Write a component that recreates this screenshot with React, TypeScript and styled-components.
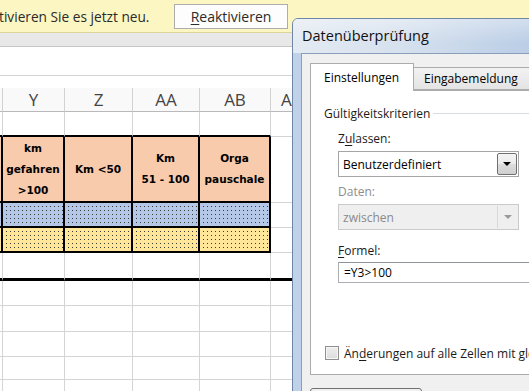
import React from 'react'
import styled, { createGlobalStyle, css } from 'styled-components'

const GlobalStyle = createGlobalStyle`
  html, body {
    margin: 0;
    padding: 0;
    background: #ffffff;
  }
  body {
    font-family: 'Open Sans', 'Noto Sans', sans-serif;
  }
`

type Fill = 'peach' | 'blue' | 'yellow'

interface SheetRowSpec {
  height: number
  fill?: Fill
  tableTop?: boolean
  heavyBottom?: boolean
  labels?: string[][]
}

const columnLetters = ['', 'Y', 'Z', 'AA', 'AB', 'AC']

const sheetRows: SheetRowSpec[] = [
  { height: 25, tableTop: true },
  {
    height: 66,
    fill: 'peach',
    labels: [
      [],
      ['km', 'gefahren', '>100'],
      ['Km <50'],
      ['Km', '51 - 100'],
      ['Orga', 'pauschale'],
    ],
  },
  { height: 25, fill: 'blue' },
  { height: 25, fill: 'yellow' },
  { height: 28, heavyBottom: true },
  { height: 25 },
  { height: 26 },
  { height: 25 },
  { height: 23 },
  { height: 20 },
]

const dotted = (base: string) => css`
  background: linear-gradient(90deg, ${base} 3px, transparent 3px) 0 0 / 4px 4px,
    linear-gradient(${base} 3px, transparent 3px) 0 0 / 4px 4px, #3a3a3a;
`

const fills = {
  peach: css`
    background: #f8cbad;
  `,
  blue: dotted('#b4c7e7'),
  yellow: dotted('#ffe699'),
}

const Screen = styled.div`
  position: relative;
  width: 529px;
  height: 391px;
  overflow: hidden;
  background: #ffffff;
`

const MessageBar = styled.div`
  box-sizing: border-box;
  display: grid;
  grid-template-columns: 174px 114px;
  align-items: center;
  height: 33px;
  background: #fcf6c2;
  border-bottom: 1px solid #dcd59b;
`

const MessageText = styled.span`
  margin-left: -1px;
  font-size: 13.7px;
  color: #2b2b2b;
  white-space: nowrap;
`

const BarButton = styled.button`
  height: 25px;
  padding: 0;
  border: 1px solid #acacac;
  background: #fdfdfd;
  font-family: 'Open Sans', 'Noto Sans', sans-serif;
  font-size: 14px;
  color: #2b2b2b;
`

const Key = styled.span`
  text-decoration: underline;
  text-underline-offset: 2px;
`

const RibbonStrip = styled.div`
  height: 13px;
  background: #e8e8e8;
  border-bottom: 1px solid #c6c6c6;
`

const FormulaArea = styled.div`
  height: 28px;
  background: #ffffff;
  border-bottom: 1px solid #d4d4d4;
`

const HeaderGap = styled.div`
  height: 12px;
  background: #ffffff;
`

const SheetLine = styled.div<{ $height: number }>`
  display: grid;
  grid-template-columns: 3px 62px 68px 67px 71px 1fr;
  height: ${p => p.$height}px;
`

const ColumnHeader = styled.div<{ $wide?: boolean }>`
  box-sizing: border-box;
  display: flex;
  align-items: center;
  justify-content: ${p => (p.$wide ? 'flex-start' : 'center')};
  padding-left: ${p => (p.$wide ? '10px' : '0')};
  background: #f9f9f9;
  border-right: 1px solid #d2d2d2;
  border-bottom: 1px solid #b9b9b9;
  font-size: 17px;
  color: #444444;
  overflow: hidden;
`

const Cell = styled.div<{
  $fill?: Fill
  $boxed?: boolean
  $topEdge?: boolean
  $heavy?: boolean
}>`
  box-sizing: border-box;
  display: flex;
  flex-direction: column;
  align-items: center;
  justify-content: center;
  border-right: ${p => (p.$boxed ? '2px solid #000000' : '1px solid #d4d4d4')};
  border-bottom: ${p =>
    p.$heavy
      ? '3px solid #000000'
      : p.$boxed || p.$topEdge
        ? '2px solid #000000'
        : '1px solid #d4d4d4'};
  ${p => p.$fill && fills[p.$fill]}
  font-family: 'DejaVu Sans', sans-serif;
  font-weight: 700;
  font-size: 10.5px;
  line-height: 21px;
  color: #000000;
  white-space: nowrap;
  overflow: hidden;
`

const Dialog = styled.div`
  position: absolute;
  left: 292px;
  top: 18px;
  width: 270px;
  height: 400px;
  box-sizing: border-box;
  display: flex;
  flex-direction: column;
  padding-left: 8px;
  background: #bfd2ea;
  border: 1px solid #7086a6;
  border-radius: 6px 0 0 0;
  overflow: hidden;
`

const TitleBar = styled.div`
  display: flex;
  align-items: center;
  height: 34px;
  margin-left: -8px;
  padding-left: 9px;
  background: linear-gradient(180deg, rgba(255, 255, 255, 0.35), rgba(255, 255, 255, 0) 70%),
    linear-gradient(90deg, #e3eaf2 0%, #d6e1ee 40%, #b4c9e4 100%);
`

const TitleText = styled.span`
  margin-top: -2px;
  font-size: 14.5px;
  color: #111111;
`

const Client = styled.div`
  flex: 1;
  display: flex;
  flex-direction: column;
  padding: 9px 0 0 8px;
  background: #f0f0f0;
  border-top: 1px solid #8a9ebb;
  border-left: 1px solid #8a9ebb;
`

const TabStrip = styled.div`
  position: relative;
  z-index: 1;
  display: flex;
  align-items: flex-end;
  height: 27px;
`

const Tab = styled.div<{ $active?: boolean }>`
  box-sizing: border-box;
  display: flex;
  align-items: center;
  height: ${p => (p.$active ? '28px' : '23px')};
  margin-bottom: ${p => (p.$active ? '-1px' : '0')};
  padding: ${p => (p.$active ? '0 0 0 13px' : '0 0 0 10px')};
  width: ${p => (p.$active ? '104px' : '140px')};
  border: 1px solid #acacac;
  border-left: ${p => (p.$active ? '1px solid #acacac' : 'none')};
  border-bottom: ${p => (p.$active ? 'none' : '1px solid #acacac')};
  background: ${p =>
    p.$active ? '#ffffff' : 'linear-gradient(180deg, #f2f2f2, #e4e4e4)'};
  font-size: 12px;
  color: #000000;
  white-space: nowrap;
`

const TabPanel = styled.div`
  box-sizing: border-box;
  display: flex;
  flex-direction: column;
  height: 285px;
  padding: 14px 0 13px 13px;
  background: #ffffff;
  border: 1px solid #acacac;
`

const GroupHeader = styled.div`
  display: flex;
  align-items: center;
  height: 17px;
`

const GroupTitle = styled.span`
  font-size: 12px;
  color: #1a1a1a;
`

const GroupRule = styled.div`
  flex: 1;
  height: 1px;
  margin-left: 3px;
  background: #d5dfe5;
`

const GroupBody = styled.div`
  display: flex;
  flex-direction: column;
  padding-left: 14px;
`

const FieldLabel = styled.div<{ $disabled?: boolean; $gap: number }>`
  margin-top: ${p => p.$gap}px;
  height: 17px;
  line-height: 17px;
  font-size: 12px;
  color: ${p => (p.$disabled ? '#8d8d8d' : '#1a1a1a')};
`

const Select = styled.div<{ $disabled?: boolean }>`
  box-sizing: border-box;
  display: flex;
  align-items: stretch;
  width: 181px;
  height: 26px;
  margin-top: 4px;
  padding: 1px;
  background: ${p => (p.$disabled ? '#efefef' : '#ffffff')};
  border: 1px solid ${p => (p.$disabled ? '#cacaca' : '#a5a5a5')};
`

const SelectValue = styled.span<{ $disabled?: boolean }>`
  flex: 1;
  display: flex;
  align-items: center;
  padding-left: 3px;
  font-size: 12px;
  color: ${p => (p.$disabled ? '#8a8a8a' : '#000000')};
`

const DropButton = styled.span<{ $disabled?: boolean }>`
  box-sizing: border-box;
  display: flex;
  align-items: center;
  justify-content: center;
  width: 20px;
  ${p =>
    p.$disabled
      ? css`
          border-left: 1px solid #d8d8d8;
        `
      : css`
          border: 1px solid #707070;
          border-radius: 2px;
          background: linear-gradient(180deg, #f4f4f4 0%, #ebebeb 50%, #dddddd 50%, #cfcfcf 100%);
        `}
`

const Arrow = styled.span<{ $disabled?: boolean }>`
  width: 0;
  height: 0;
  border-left: 4px solid transparent;
  border-right: 4px solid transparent;
  border-top: 4px solid ${p => (p.$disabled ? '#9a9a9a' : '#000000')};
`

const FormulaInput = styled.div`
  box-sizing: border-box;
  display: flex;
  align-items: center;
  width: 220px;
  height: 21px;
  margin-top: 3px;
  padding-left: 5px;
  background: #ffffff;
  border: 1px solid #abadb3;
  border-top-color: #8f949c;
  font-size: 12px;
  color: #000000;
`

const CheckRow = styled.label`
  display: flex;
  align-items: center;
  gap: 5px;
  margin-top: auto;
  margin-left: 1px;
  height: 16px;
  font-size: 12px;
  color: #1a1a1a;
  white-space: nowrap;
`

const CheckBox = styled.span`
  flex-shrink: 0;
  box-sizing: border-box;
  width: 14px;
  height: 14px;
  border: 1px solid #8f8f8f;
  background: linear-gradient(180deg, #eeeeee, #dcdcdc);
  box-shadow: inset 0 0 0 1px #f6f6f6;
`

const ButtonRow = styled.div`
  display: flex;
  margin-top: 13px;
`

const DialogButton = styled.button`
  width: 112px;
  height: 23px;
  border: 1px solid #707070;
  border-radius: 3px;
  background: linear-gradient(180deg, #f2f2f2, #dddddd);
  font-family: 'Open Sans', 'Noto Sans', sans-serif;
  font-size: 12px;
`

export default function App() {
  return (
    <Screen>
      <GlobalStyle />
      <MessageBar>
        <MessageText>tivieren Sie es jetzt neu.</MessageText>
        <BarButton>
          <Key>R</Key>eaktivieren
        </BarButton>
      </MessageBar>
      <RibbonStrip />
      <FormulaArea />
      <HeaderGap />

      <SheetLine $height={24}>
        {columnLetters.map((letter, i) => (
          <ColumnHeader key={i} $wide={i === 5}>
            {letter}
          </ColumnHeader>
        ))}
      </SheetLine>

      {sheetRows.map((row, r) => (
        <SheetLine key={r} $height={row.height}>
          {columnLetters.map((_, c) => {
            const inTable = c < 5
            return (
              <Cell
                key={c}
                $fill={inTable ? row.fill : undefined}
                $boxed={inTable && !!row.fill}
                $topEdge={inTable && row.tableTop}
                $heavy={row.heavyBottom}
              >
                {row.labels?.[c]?.map(line => <span key={line}>{line}</span>)}
              </Cell>
            )
          })}
        </SheetLine>
      ))}

      <Dialog>
        <TitleBar>
          <TitleText>Datenüberprüfung</TitleText>
        </TitleBar>
        <Client>
          <TabStrip>
            <Tab $active>Einstellungen</Tab>
            <Tab>Eingabemeldung</Tab>
          </TabStrip>
          <TabPanel>
            <GroupHeader>
              <GroupTitle>Gültigkeitskriterien</GroupTitle>
              <GroupRule />
            </GroupHeader>
            <GroupBody>
              <FieldLabel $gap={8}>
                Z<Key>u</Key>lassen:
              </FieldLabel>
              <Select>
                <SelectValue>Benutzerdefiniert</SelectValue>
                <DropButton>
                  <Arrow />
                </DropButton>
              </Select>
              <FieldLabel $gap={6} $disabled>
                Daten:
              </FieldLabel>
              <Select $disabled>
                <SelectValue $disabled>zwischen</SelectValue>
                <DropButton $disabled>
                  <Arrow $disabled />
                </DropButton>
              </Select>
              <FieldLabel $gap={12}>
                <Key>F</Key>ormel:
              </FieldLabel>
              <FormulaInput>=Y3&gt;100</FormulaInput>
            </GroupBody>
            <CheckRow>
              <CheckBox />
              <span>
                Än<Key>d</Key>erungen auf alle Zellen mit gleichen Einstellungen anwenden
              </span>
            </CheckRow>
          </TabPanel>
          <ButtonRow>
            <DialogButton>Alle löschen</DialogButton>
          </ButtonRow>
        </Client>
      </Dialog>
    </Screen>
  )
}
